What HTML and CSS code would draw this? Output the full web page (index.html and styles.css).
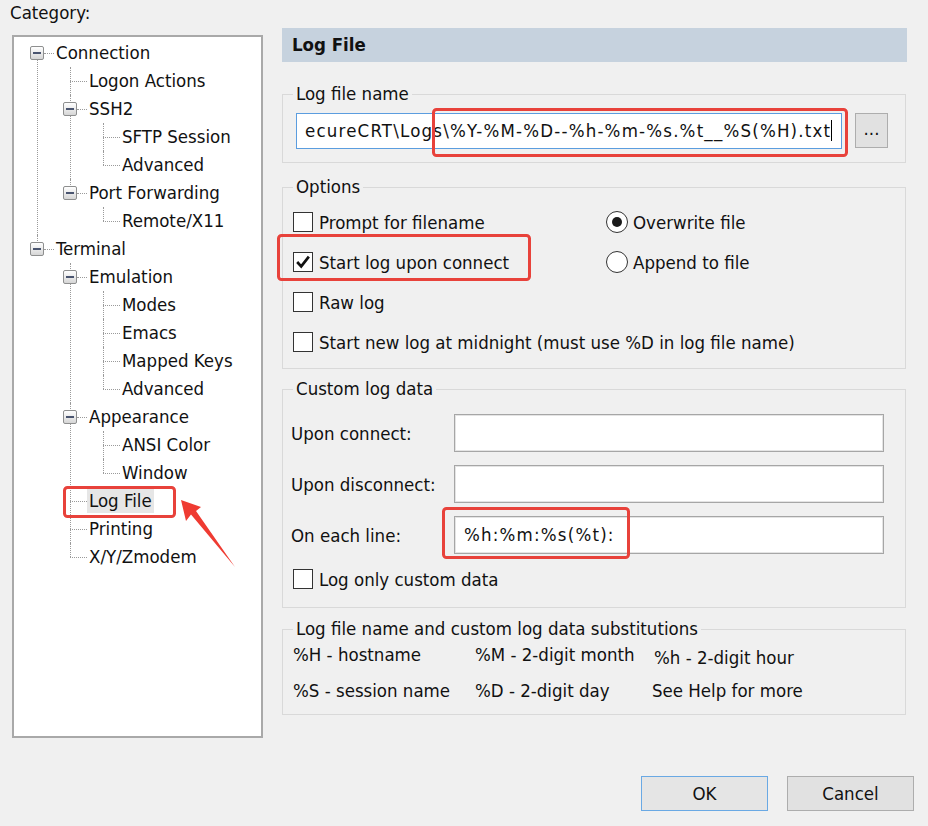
FILE: index.html
```html
<!DOCTYPE html>
<html>
<head>
<meta charset="utf-8">
<title>Log File</title>
<link rel="stylesheet" href="styles.css">
</head>
<body>
<div class="dialog">
  <div class="main">
    <div class="left">
      <div class="cat-label">Category:</div>
      <div class="tree">
        <ul class="root">
          <li><div class="row"><span class="exp"></span><span class="stub"></span><span class="label">Connection</span></div>
            <ul>
              <li><div class="row leaf"><span class="stub"></span><span class="label">Logon Actions</span></div></li>
              <li><div class="row"><span class="exp"></span><span class="stub"></span><span class="label">SSH2</span></div>
                <ul>
                  <li><div class="row leaf"><span class="stub"></span><span class="label">SFTP Session</span></div></li>
                  <li><div class="row leaf"><span class="stub"></span><span class="label">Advanced</span></div></li>
                </ul>
              </li>
              <li><div class="row"><span class="exp"></span><span class="stub"></span><span class="label">Port Forwarding</span></div>
                <ul>
                  <li><div class="row leaf"><span class="stub"></span><span class="label">Remote/X11</span></div></li>
                </ul>
              </li>
            </ul>
          </li>
          <li><div class="row"><span class="exp"></span><span class="stub"></span><span class="label">Terminal</span></div>
            <ul>
              <li><div class="row"><span class="exp"></span><span class="stub"></span><span class="label">Emulation</span></div>
                <ul>
                  <li><div class="row leaf"><span class="stub"></span><span class="label">Modes</span></div></li>
                  <li><div class="row leaf"><span class="stub"></span><span class="label">Emacs</span></div></li>
                  <li><div class="row leaf"><span class="stub"></span><span class="label">Mapped Keys</span></div></li>
                  <li><div class="row leaf"><span class="stub"></span><span class="label">Advanced</span></div></li>
                </ul>
              </li>
              <li><div class="row"><span class="exp"></span><span class="stub"></span><span class="label">Appearance</span></div>
                <ul>
                  <li><div class="row leaf"><span class="stub"></span><span class="label">ANSI Color</span></div></li>
                  <li><div class="row leaf"><span class="stub"></span><span class="label">Window</span></div></li>
                </ul>
              </li>
              <li><div class="row leaf"><span class="stub"></span><span class="label selected">Log File</span></div></li>
              <li><div class="row leaf"><span class="stub"></span><span class="label">Printing</span></div></li>
              <li><div class="row leaf"><span class="stub"></span><span class="label">X/Y/Zmodem</span></div></li>
            </ul>
          </li>
        </ul>
      </div>
    </div>

    <div class="right">
      <div class="header">Log File</div>

      <fieldset class="group g-name">
        <legend>Log file name</legend>
        <div class="name-row">
          <div class="textbox focused">ecureCRT\Logs\%Y-%M-%D--%h-%m-%s.%t__%S(%H).txt<span class="caret"></span></div>
          <div class="btn browse">...</div>
        </div>
      </fieldset>

      <fieldset class="group g-options">
        <legend>Options</legend>
        <div class="opt-grid">
          <div class="opt"><span class="check"></span><span>Prompt for filename</span></div>
          <div class="opt"><span class="radio on"><span class="dot"></span></span><span>Overwrite file</span></div>
          <div class="opt"><span class="check">
            <svg viewBox="0 0 20 20" width="18" height="18"><path d="M3.5 10 L8 14.8 L16.5 4" fill="none" stroke="#111" stroke-width="3"/></svg>
          </span><span>Start log upon connect</span></div>
          <div class="opt"><span class="radio"></span><span>Append to file</span></div>
          <div class="opt wide"><span class="check"></span><span>Raw log</span></div>
          <div class="opt wide"><span class="check"></span><span>Start new log at midnight (must use %D in log file name)</span></div>
        </div>
      </fieldset>

      <fieldset class="group g-custom">
        <legend>Custom log data</legend>
        <div class="custom-grid">
          <div class="clabel">Upon connect:</div><div class="textbox plain"></div>
          <div class="clabel">Upon disconnect:</div><div class="textbox plain"></div>
          <div class="clabel">On each line:</div><div class="textbox plain">%h:%m:%s(%t):</div>
        </div>
        <div class="opt only"><span class="check"></span><span>Log only custom data</span></div>
      </fieldset>

      <fieldset class="group g-subst">
        <legend>Log file name and custom log data substitutions</legend>
        <div class="subst-grid">
          <div>%H - hostname</div>
          <div>%M - 2-digit month</div>
          <div class="low">%h - 2-digit hour</div>
          <div>%S - session name</div>
          <div>%D - 2-digit day</div>
          <div class="shift">See Help for more</div>
        </div>
      </fieldset>
    </div>
  </div>

  <div class="buttons">
    <div class="btn dlg default">OK</div>
    <div class="btn dlg">Cancel</div>
  </div>

  <svg class="annot" viewBox="0 0 928 826" width="928" height="826">
    <rect x="433.5" y="109.5" width="413" height="46" rx="3" />
    <rect x="278.5" y="235.5" width="251" height="44" rx="3" />
    <rect x="443.5" y="508.5" width="185" height="49" rx="3" />
    <rect x="64.5" y="487.5" width="110" height="29" rx="3" />
    <polygon class="arrow" points="181,500 201,507 196,511 235,567 191,514.5 186,521" />
  </svg>
</div>
</body>
</html>
```

FILE: styles.css
```css
html, body {
  margin: 0;
  padding: 0;
}
body {
  background: #f0f0f0;
  font-family: "DejaVu Sans Condensed", "Liberation Sans", sans-serif;
  font-size: 18.5px;
  color: #111;
}
.dialog {
  position: relative;
  width: 928px;
  height: 826px;
  overflow: hidden;
}
.main {
  display: flex;
  align-items: flex-start;
}

/* ---------- left: category tree ---------- */
.left {
  width: 253px;
  margin-left: 10px;
}
.cat-label {
  margin-top: 3px;
  height: 20px;
  line-height: 20px;
}
.tree {
  margin-top: 12px;
  margin-left: 2px;
  width: 251px;
  height: 703px;
  box-sizing: border-box;
  border: 2px solid #a9a9a9;
  background: #fff;
  padding-top: 2px;
}
.tree ul {
  list-style: none;
  margin: 0;
  padding: 0;
}
.tree ul ul {
  padding-left: 33px;
}
.tree li {
  position: relative;
}
.tree li::before {
  content: "";
  position: absolute;
  left: 23px;
  top: 0;
  height: 14px;
  border-left: 1px dotted #9a9a9a;
}
.tree li:not(:last-child)::after {
  content: "";
  position: absolute;
  left: 23px;
  top: 14px;
  bottom: 0;
  border-left: 1px dotted #9a9a9a;
}
.tree .root > li:first-child::before {
  display: none;
}
.row {
  position: relative;
  z-index: 1;
  display: flex;
  align-items: center;
  height: 28px;
  padding-left: 16px;
}
.row.leaf {
  padding-left: 23px;
}
.exp {
  width: 14px;
  height: 14px;
  box-sizing: border-box;
  border: 1px solid #8e8f8f;
  border-radius: 2px;
  background: linear-gradient(#ffffff, #d6d6d6);
  display: flex;
  align-items: center;
  justify-content: center;
}
.exp::before {
  content: "";
  width: 8px;
  height: 2px;
  background: #4a5570;
}
.stub {
  width: 10px;
  height: 0;
  border-top: 1px dotted #9a9a9a;
}
.row.leaf .stub {
  width: 17px;
}
.label {
  padding: 1px 2px;
  line-height: 22px;
  white-space: nowrap;
}
.label.selected {
  background: #e6e6e6;
}

/* ---------- right: log file page ---------- */
.right {
  margin-left: 19px;
  width: 625px;
  padding-top: 28px;
}
.header {
  height: 34px;
  line-height: 34px;
  background: #c6d2de;
  padding-left: 10px;
  font-weight: bold;
}
.group {
  margin: 0;
  width: 624px;
  box-sizing: border-box;
  min-width: 0;
  border: 1px solid #d9d9d9;
  padding: 0 10px;
}
.group legend {
  padding: 0 3px;
  height: 20px;
  line-height: 20px;
}
.g-name {
  margin-top: 22px;
  padding-top: 9px;
  padding-bottom: 13px;
}
.name-row {
  display: flex;
  align-items: flex-start;
}
.textbox {
  box-sizing: border-box;
  background: #fff;
  border: 1px solid #a6a6a6;
  box-shadow: inset 0 0 0 1px #e4e4e4;
  white-space: nowrap;
  overflow: hidden;
  letter-spacing: 1.2px;
}
.textbox.focused {
  margin-left: 3px;
  width: 546px;
  height: 36px;
  line-height: 34px;
  padding-left: 8px;
  border-color: #5b9ddf;
  box-shadow: none;
}
.caret {
  display: inline-block;
  width: 1px;
  height: 21px;
  background: #000;
  vertical-align: -4px;
}
.btn {
  box-sizing: border-box;
  background: #e1e1e1;
  border: 1px solid #adadad;
  display: flex;
  align-items: center;
  justify-content: center;
}
.browse {
  margin-left: 13px;
  width: 33px;
  height: 35px;
  padding-bottom: 4px;
}

.g-options {
  margin-top: 14px;
  padding-top: 5px;
  padding-bottom: 6px;
}
.opt-grid {
  display: grid;
  grid-template-columns: 313px 1fr;
  grid-auto-rows: 40px;
}
.opt {
  display: flex;
  align-items: center;
  white-space: nowrap;
}
.opt.wide {
  grid-column: 1 / span 2;
}
.check {
  width: 20px;
  height: 20px;
  box-sizing: border-box;
  border: 1px solid #333;
  background: #fff;
  margin-right: 6px;
  display: flex;
  align-items: center;
  justify-content: center;
  flex: none;
}
.radio {
  width: 22px;
  height: 22px;
  box-sizing: border-box;
  border: 1px solid #333;
  border-radius: 50%;
  background: #fff;
  margin-right: 5px;
  display: flex;
  align-items: center;
  justify-content: center;
  flex: none;
}
.radio .dot {
  width: 10px;
  height: 10px;
  border-radius: 50%;
  background: #1a1a1a;
}

.g-custom {
  margin-top: 10px;
  padding-top: 15px;
  padding-bottom: 8px;
}
.custom-grid {
  display: grid;
  grid-template-columns: 161px 430px;
  grid-auto-rows: 38px;
  row-gap: 13px;
  align-items: center;
}
.clabel {
  margin-left: -2px;
  white-space: nowrap;
}
.textbox.plain {
  height: 38px;
  line-height: 36px;
  padding-left: 9px;
}
.opt.only {
  height: 40px;
  margin-top: 5px;
}

.g-subst {
  margin-top: 11px;
  padding-top: 3px;
  padding-bottom: 12px;
}
.subst-grid {
  display: grid;
  grid-template-columns: 182px 179px 1fr;
  grid-auto-rows: 24px;
  row-gap: 12px;
  align-items: center;
  white-space: nowrap;
}
.subst-grid .low {
  position: relative;
  top: 3px;
}
.subst-grid .shift {
  margin-left: -2px;
}

/* ---------- bottom buttons ---------- */
.buttons {
  display: flex;
  justify-content: flex-end;
  gap: 19px;
  padding-right: 14px;
  margin-top: 38px;
}
.btn.dlg {
  width: 127px;
  height: 35px;
}
.btn.dlg.default {
  border-color: #6aa9e4;
  background: #e5e5e5;
}

/* ---------- annotation overlay ---------- */
.annot {
  position: absolute;
  left: 0;
  top: 0;
  pointer-events: none;
}
.annot rect {
  fill: none;
  stroke: #e8423b;
  stroke-width: 3;
}
.annot .arrow {
  fill: #ef3b32;
}
```
